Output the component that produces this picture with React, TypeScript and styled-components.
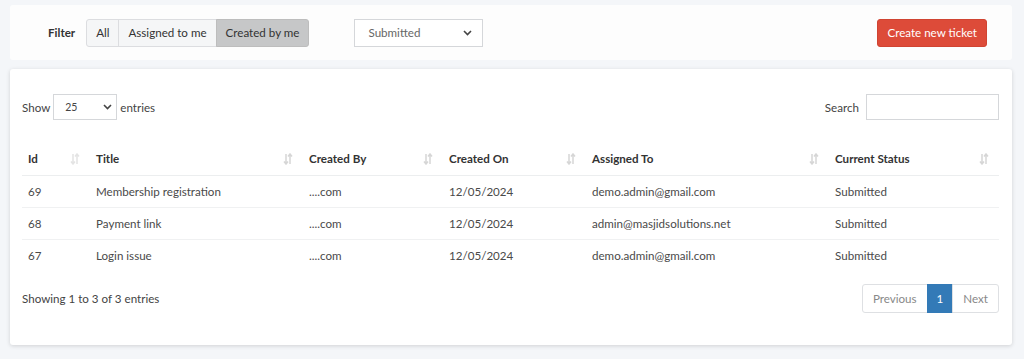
import styled, { createGlobalStyle } from 'styled-components'

const GlobalStyle = createGlobalStyle`
    html, body {
        margin: 0;
        padding: 0;
        background: #f4f6f9;
        font-family: "Lato", "Open Sans", sans-serif;
        font-size: 11.6px;
        color: #444;
    }
    * {
        box-sizing: border-box;
    }
`

const Page = styled.div`
    width: 1024px;
    height: 359px;
    padding: 5px 12px 0 10px;
    display: flex;
    flex-direction: column;
    gap: 9px;
`

const FilterBar = styled.div`
    height: 55px;
    background: #fdfdfd;
    border-radius: 3px;
    display: flex;
    align-items: center;
    padding: 0 25px 0 38px;
`

const FilterLabel = styled.span`
    font-weight: 700;
    color: #333;
    margin-right: 11px;
`

const ButtonGroup = styled.div`
    display: flex;
`

const ToggleButton = styled.button<{ $active?: boolean }>`
    height: 28px;
    padding: 0 9px;
    font: inherit;
    color: #333;
    background: ${p => (p.$active ? '#c6c7c8' : '#f5f6f7')};
    border: 1px solid ${p => (p.$active ? '#bdbdbd' : '#dcdde0')};
    margin-left: -1px;
    &:first-child {
        border-radius: 3px 0 0 3px;
        margin-left: 0;
    }
    &:last-child {
        border-radius: 0 3px 3px 0;
    }
`

const StatusSelect = styled.div`
    margin-left: 45px;
    width: 129px;
    height: 28px;
    border: 1px solid #d5d7da;
    background: #fff;
    display: flex;
    align-items: center;
    justify-content: space-between;
    padding: 0 10px 0 13px;
    color: #666;
`

const Spacer = styled.div`
    flex: 1;
`

const CreateButton = styled.button`
    height: 28px;
    padding: 0 9px;
    background: #dd4b39;
    border: 1px solid #d04432;
    border-radius: 3px;
    color: #fff;
    font: inherit;
`

const Card = styled.div`
    background: #fff;
    border-radius: 3px;
    box-shadow: 0 1px 4px rgba(0, 0, 0, 0.15);
    padding: 25px 13px 0 12px;
    height: 276px;
`

const TopRow = styled.div`
    display: flex;
    justify-content: space-between;
    align-items: center;
    height: 26px;
`

const Inline = styled.label`
    display: flex;
    align-items: center;
    gap: 3px;
    color: #444;
`

const SmallSelect = styled.div`
    width: 64px;
    height: 26px;
    border: 1px solid #d5d7da;
    display: flex;
    align-items: center;
    justify-content: space-between;
    padding: 0 4px 0 11px;
    font-size: 10.5px;
    color: #444;
`

const SearchInput = styled.div`
    width: 133px;
    height: 26px;
    border: 1px solid #d5d7da;
    margin-left: 4px;
`

const Table = styled.table`
    width: 977px;
    margin-top: 22px;
    border-collapse: collapse;
    table-layout: fixed;
`

const HeadCell = styled.th<{ $w: number }>`
    width: ${p => p.$w}px;
    height: 33px;
    padding: 1px 10px 0 6px;
    text-align: left;
    font-weight: 700;
    color: #333;
    border-bottom: 1px solid #eceeef;
`

const HeadInner = styled.div`
    display: flex;
    justify-content: space-between;
    align-items: center;
`

const Cell = styled.td`
    height: 32px;
    padding: 0 6px;
    color: #4a4a4a;
    border-bottom: 1px solid #f0f1f2;
`

const Row = styled.tr`
    &:last-child td {
        border-bottom: none;
    }
`

const Footer = styled.div`
    display: flex;
    justify-content: space-between;
    align-items: center;
    margin-top: 13px;
`

const Pager = styled.div`
    display: flex;
`

const PageItem = styled.div<{ $active?: boolean }>`
    height: 29px;
    padding: 0 ${p => (p.$active ? 9 : 10)}px;
    display: flex;
    align-items: center;
    border: 1px solid ${p => (p.$active ? '#337ab7' : '#dee0e3')};
    background: ${p => (p.$active ? '#337ab7' : '#fff')};
    color: ${p => (p.$active ? '#fff' : '#888')};
    margin-left: -1px;
    &:first-child {
        border-radius: 3px 0 0 3px;
    }
    &:last-child {
        border-radius: 0 3px 3px 0;
    }
`

const Caret = () => (
    <svg width="9" height="6" viewBox="0 0 9 6">
        <path d="M1 1l3.5 3.5L8 1" fill="none" stroke="#444" strokeWidth="1.6" />
    </svg>
)

const SortIcon = ({ first }: { first?: boolean }) => (
    <svg width="10" height="12" viewBox="0 0 10 12">
        <g stroke={first ? '#e4e4e4' : '#d6d6d6'} strokeWidth="1.5" fill="none">
            <path d="M3 1v10M1 8.5l2 2.5 2-2.5" />
            <path d="M7 11V1M5 3.5L7 1l2 2.5" />
        </g>
    </svg>
)

const columns = [
    { title: 'Id', w: 68 },
    { title: 'Title', w: 213 },
    { title: 'Created By', w: 140 },
    { title: 'Created On', w: 143 },
    { title: 'Assigned To', w: 243 },
    { title: 'Current Status', w: 170 },
]

const tickets = [
    { id: 69, title: 'Membership registration', by: '....com', on: '12/05/2024', to: 'demo.admin@gmail.com', status: 'Submitted' },
    { id: 68, title: 'Payment link', by: '....com', on: '12/05/2024', to: 'admin@masjidsolutions.net', status: 'Submitted' },
    { id: 67, title: 'Login issue', by: '....com', on: '12/05/2024', to: 'demo.admin@gmail.com', status: 'Submitted' },
]

const App = () => {
    return (
        <Page>
            <GlobalStyle />
            <FilterBar>
                <FilterLabel>Filter</FilterLabel>
                <ButtonGroup>
                    <ToggleButton>All</ToggleButton>
                    <ToggleButton>Assigned to me</ToggleButton>
                    <ToggleButton $active>Created by me</ToggleButton>
                </ButtonGroup>
                <StatusSelect>
                    Submitted
                    <Caret />
                </StatusSelect>
                <Spacer />
                <CreateButton>Create new ticket</CreateButton>
            </FilterBar>
            <Card>
                <TopRow>
                    <Inline>
                        Show
                        <SmallSelect>
                            25
                            <Caret />
                        </SmallSelect>
                        entries
                    </Inline>
                    <Inline>
                        Search
                        <SearchInput />
                    </Inline>
                </TopRow>
                <Table>
                    <thead>
                        <tr>
                            {columns.map((c, i) => (
                                <HeadCell key={c.title} $w={c.w}>
                                    <HeadInner>
                                        {c.title}
                                        <SortIcon first={i === 0} />
                                    </HeadInner>
                                </HeadCell>
                            ))}
                        </tr>
                    </thead>
                    <tbody>
                        {tickets.map(t => (
                            <Row key={t.id}>
                                <Cell>{t.id}</Cell>
                                <Cell>{t.title}</Cell>
                                <Cell>{t.by}</Cell>
                                <Cell>{t.on}</Cell>
                                <Cell>{t.to}</Cell>
                                <Cell>{t.status}</Cell>
                            </Row>
                        ))}
                    </tbody>
                </Table>
                <Footer>
                    <span>Showing 1 to 3 of 3 entries</span>
                    <Pager>
                        <PageItem>Previous</PageItem>
                        <PageItem $active>1</PageItem>
                        <PageItem>Next</PageItem>
                    </Pager>
                </Footer>
            </Card>
        </Page>
    )
}

export default App
